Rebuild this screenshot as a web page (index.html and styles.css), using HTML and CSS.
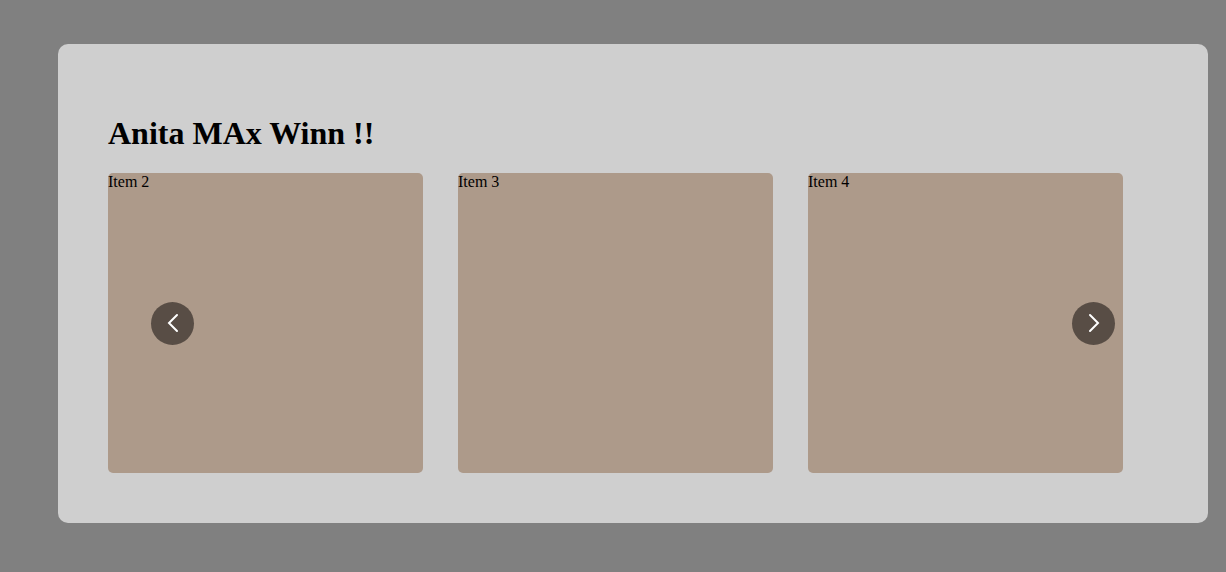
FILE: index.html
```
<!DOCTYPE html>
<html lang="en">
<head>
<meta charset="utf-8">
<title>Carousel</title>
<link rel="stylesheet" href="styles.css">
</head>
<body>
<main class="panel">
  <h1 class="title">Anita MAx Winn !!</h1>
  <div class="carousel">
    <ul class="track">
      <li class="item">Item 2</li>
      <li class="item">Item 3</li>
      <li class="item">Item 4</li>
    </ul>
    <button class="arrow arrow-prev" type="button" aria-label="Previous">
      <svg width="21" height="21" viewBox="0 0 21 21" aria-hidden="true"><path d="M15 2 L7 10 L15 18"/></svg>
    </button>
    <button class="arrow arrow-next" type="button" aria-label="Next">
      <svg width="21" height="21" viewBox="0 0 21 21" aria-hidden="true"><path d="M7 2 L15 10 L7 18"/></svg>
    </button>
  </div>
</main>
</body>
</html>
```
FILE: styles.css
```
* {
  box-sizing: border-box;
}

body {
  margin: 0;
  padding: 44px 18px 49px 58px;
  background: #808080;
  font-family: "Liberation Serif", "Times New Roman", serif;
  font-size: 16px;
}

.panel {
  padding: 71px 85px 50px 50px;
  border-radius: 10px;
  background: #cfcfcf;
}

.title {
  margin: 0 0 21px;
  font-size: 32px;
  line-height: 37px;
}

.carousel {
  position: relative;
}

.track {
  display: grid;
  grid-template-columns: repeat(3, 1fr);
  gap: 35px;
  margin: 0;
  padding: 0;
  list-style: none;
}

.item {
  min-height: 300px;
  border-radius: 5px;
  background: #ad9a8a;
  line-height: 18px;
}

.arrow {
  position: absolute;
  top: 0;
  bottom: 0;
  display: grid;
  place-items: center;
  width: 43px;
  height: 43px;
  margin: auto 0;
  padding: 0;
  border: 0;
  border-radius: 50%;
  background: #584d45;
  cursor: pointer;
}

.arrow-prev {
  left: 43px;
}

.arrow-next {
  right: 8px;
}

.arrow svg {
  fill: none;
  stroke: #fff;
  stroke-width: 2;
  stroke-linecap: round;
}
```
